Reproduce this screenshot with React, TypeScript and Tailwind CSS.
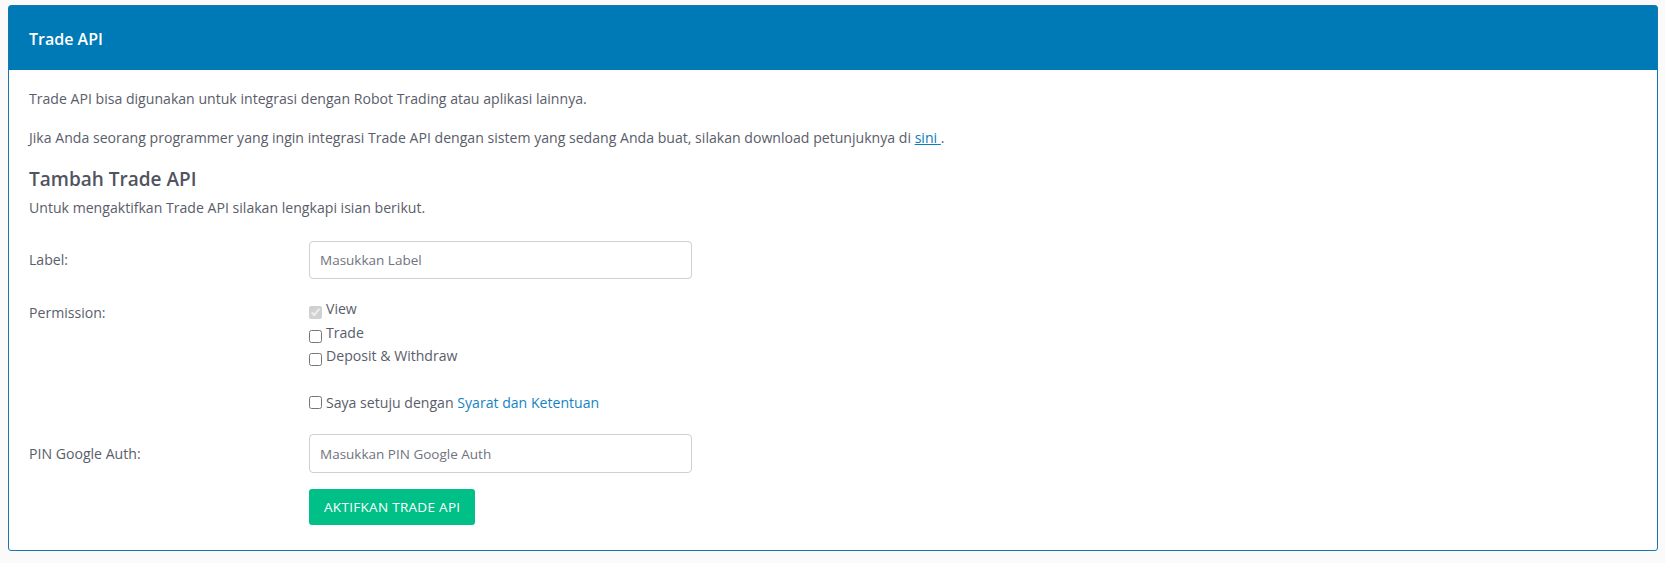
import { useState } from 'react';

export default function App() {
  const [label, setLabel] = useState('');
  const [pin, setPin] = useState('');
  const [trade, setTrade] = useState(false);
  const [deposit, setDeposit] = useState(false);
  const [agree, setAgree] = useState(false);

  return (
    <div
      className="min-h-screen bg-[#fafafa] pt-[5px] pl-2 pr-[7px] text-[#5a5d6a]"
      style={{ fontFamily: '"Open Sans", "Liberation Sans", sans-serif' }}
    >
      <div className="rounded-[3px] border border-[#1776ad] bg-white">
        <div className="h-[64px] bg-[#007ab6] px-5 flex items-center">
          <h2 className="text-[16px] font-semibold text-white leading-5 pt-[1px]">Trade API</h2>
        </div>
        <div className="px-5 pt-[19px] pb-[25px] text-[14.1px]">
          <p className="leading-5">
            Trade API bisa digunakan untuk integrasi dengan Robot Trading atau aplikasi lainnya.
          </p>
          <p className="leading-5 mt-[19px]">
            Jika Anda seorang programmer yang ingin integrasi Trade API dengan sistem yang sedang Anda buat, silakan
            download petunjuknya di{' '}
            <a href="#" className="text-[#0a7dc0] underline">
              sini{' '}
            </a>
            .
          </p>
          <h3 className="mt-[18px] text-[19px] leading-[26px] font-semibold text-[#50545f]">Tambah Trade API</h3>
          <p className="leading-5 mt-[6px]">Untuk mengaktifkan Trade API silakan lengkapi isian berikut.</p>

          <form onSubmit={(e) => e.preventDefault()}>
            <div className="grid grid-cols-[280px_383px] items-center mt-[23px]">
              <label htmlFor="label" className="leading-5">
                Label:
              </label>
              <input
                id="label"
                type="text"
                placeholder="Masukkan Label"
                value={label}
                onChange={(e) => setLabel(e.target.value)}
                className="h-[38px] w-full rounded-[4px] border border-[#cfcfd4] px-[10px] text-[13.5px] placeholder:text-[#707380] outline-none"
              />
            </div>

            <div className="grid grid-cols-[280px_383px] mt-[21px]">
              <div className="leading-5 pt-[3px]">Permission:</div>
              <div>
                <div className="h-[23.5px] flex items-start gap-[4px]">
                  <input type="checkbox" checked disabled readOnly className="mt-[6px] m-0 w-[13px] h-[13px]" />
                  <span className="leading-[18px]">View</span>
                </div>
                <label className="h-[23.5px] flex items-start gap-[4px]">
                  <input
                    type="checkbox"
                    checked={trade}
                    onChange={(e) => setTrade(e.target.checked)}
                    className="mt-[6px] w-[13px] h-[13px]"
                  />
                  <span className="leading-[18px]">Trade</span>
                </label>
                <label className="h-[23.5px] flex items-start gap-[4px]">
                  <input
                    type="checkbox"
                    checked={deposit}
                    onChange={(e) => setDeposit(e.target.checked)}
                    className="mt-[6px] w-[13px] h-[13px]"
                  />
                  <span className="leading-[18px]">Deposit &amp; Withdraw</span>
                </label>
                <label className="mt-[23.5px] h-[18px] flex items-start gap-[4px]">
                  <input
                    type="checkbox"
                    checked={agree}
                    onChange={(e) => setAgree(e.target.checked)}
                    className="mt-[2px] w-[13px] h-[13px]"
                  />
                  <span className="leading-[18px]">
                    Saya setuju dengan{' '}
                    <a href="#" className="text-[#1484c4]">
                      Syarat dan Ketentuan
                    </a>
                  </span>
                </label>
              </div>
            </div>

            <div className="grid grid-cols-[280px_383px] items-center mt-[22px]">
              <label htmlFor="pin" className="leading-5">
                PIN Google Auth:
              </label>
              <input
                id="pin"
                type="text"
                placeholder="Masukkan PIN Google Auth"
                value={pin}
                onChange={(e) => setPin(e.target.value)}
                className="h-[39px] w-full rounded-[4px] border border-[#cfcfd4] px-[10px] text-[13.5px] placeholder:text-[#707380] outline-none"
              />
            </div>

            <div className="grid grid-cols-[280px_383px] mt-4">
              <div></div>
              <div>
                <button className="h-9 rounded-[3px] bg-[#00bf87] px-[15px] text-[13.5px] tracking-[0.3px] text-white uppercase hover:bg-[#00a875]">
                  Aktifkan Trade API
                </button>
              </div>
            </div>
          </form>
        </div>
      </div>
    </div>
  );
}
